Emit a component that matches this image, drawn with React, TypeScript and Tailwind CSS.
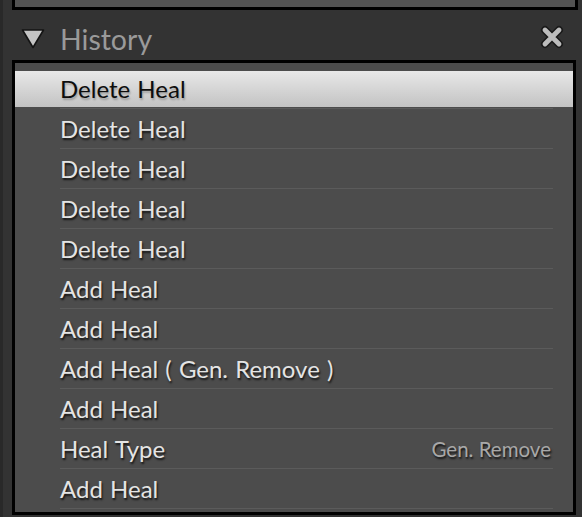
import React from "react";

type Row = { label: string; value?: string; selected?: boolean };

const rows: Row[] = [
  { label: "Delete Heal", selected: true },
  { label: "Delete Heal" },
  { label: "Delete Heal" },
  { label: "Delete Heal" },
  { label: "Delete Heal" },
  { label: "Add Heal" },
  { label: "Add Heal" },
  { label: "Add Heal ( Gen. Remove )" },
  { label: "Add Heal" },
  { label: "Heal Type", value: "Gen. Remove" },
  { label: "Add Heal" },
];

export default function App() {
  return (
    <div className="w-[582px] h-[517px] bg-[#333333] border-l-[3px] border-l-[#292929] pl-[9px] flex flex-col overflow-hidden font-['Lato','Liberation_Sans',sans-serif]">
      <div className="h-[10px] w-[566px] shrink-0 bg-[#535353] border-x-[3px] border-b-[3px] border-black" />
      <div className="h-[50px] w-[564px] shrink-0 flex items-center pt-[8px]">
        <svg width="24" height="22" viewBox="0 0 24 22" className="ml-[9px]">
          <polygon points="1.5,2 22.5,2 12,19.5" fill="#c4c4c4" stroke="#141414" strokeWidth="1.6" strokeLinejoin="round" />
        </svg>
        <span className="ml-[15px] text-[28.5px] leading-none text-[#9a9a9a]">History</span>
        <div className="flex-1" />
        <svg width="26" height="26" viewBox="0 0 26 26" className="mr-[11px] mt-[-4px]">
          <g strokeLinecap="round">
            <path d="M6 6 L20 20 M20 6 L6 20" stroke="#1a1a1a" strokeWidth="8" />
            <path d="M6 6 L20 20 M20 6 L6 20" stroke="#bdbdbd" strokeWidth="4.8" />
          </g>
        </svg>
      </div>
      <div className="h-[455px] w-[564px] shrink-0 border-[3px] border-black bg-[#4c4c4c] pt-[6px] flex flex-col">
        {rows.map((r, i) => (
          <div key={i} className="h-[40px] shrink-0 flex flex-col pt-[2px]">
            <div
              className={
                "h-[36px] flex items-center pl-[45px] pr-[22px] " +
                (r.selected
                  ? "bg-linear-to-b from-[#e8e8e8] to-[#c3c3c3] text-[#0d0d0d] [text-shadow:1px_2px_2px_rgba(0,0,0,0.25)]"
                  : "text-[#e4e4e4] [text-shadow:1px_2px_2px_rgba(0,0,0,0.75)]")
              }
            >
              <span className="text-[24px] leading-none [word-spacing:1px]">{r.label}</span>
              {r.value && (
                <span className="ml-auto text-[20.5px] leading-none text-[#a8a8a8]">{r.value}</span>
              )}
            </div>
            <div className="h-[1px] mt-[1px] ml-[45px] mr-[20px] bg-[#5b5b5b]" />
          </div>
        ))}
      </div>
    </div>
  );
}
